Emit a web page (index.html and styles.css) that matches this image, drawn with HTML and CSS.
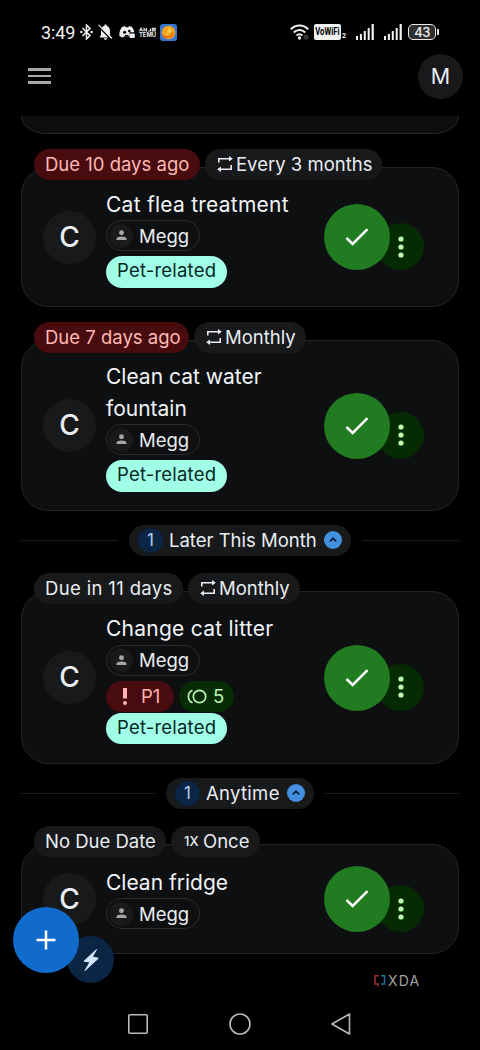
FILE: index.html
```html
<!DOCTYPE html>
<html lang="en">
<head>
<meta charset="utf-8">
<title>Chores</title>
<link rel="stylesheet" href="styles.css">
</head>
<body>
<svg class="defs" width="0" height="0" aria-hidden="true">
  <symbol id="repeat" viewBox="0 0 16 16"><g fill="none" stroke="currentColor" stroke-width="1.6"><path d="M1.800 6.500V2.800H14M1.800 9.500v0M14.200 9v4.200H2"/></g><path d="M12 0 15.800 2.800 12 5.600zM4 10.400.2 13.200 4 16z"/></symbol>
  <symbol id="person" viewBox="0 0 12 12"><circle cx="6" cy="3.1" r="2.7"/><path d="M.5 11V9.600C.5 7.800 3.400 7 6 7s5.500.8 5.500 2.600V11z"/></symbol>
  <symbol id="check" viewBox="0 0 24 20"><path d="m1.500 11 6.200 6L22.500 2.200" fill="none" stroke="currentColor" stroke-width="2.500"/></symbol>
  <symbol id="dots" viewBox="0 0 6 22"><circle cx="3" cy="3" r="2.600"/><circle cx="3" cy="11" r="2.600"/><circle cx="3" cy="19" r="2.600"/></symbol>
  <symbol id="up" viewBox="0 0 18 18"><circle cx="9" cy="9" r="9" fill="#4390df"/><path d="m5.800 10.500 3.200-3.200 3.200 3.200" fill="none" stroke="#071d36" stroke-width="1.700"/></symbol>
  <symbol id="signal" viewBox="0 0 18 16"><path d="M0 12h2v4H0zM3.900 10h2v6h-2zM7.800 7h2v9h-2zM11.700 4h2v12h-2zM15.600 0h2.200v16h-2.200z"/></symbol>
</svg>

<div class="statusbar">
  <span class="clock">3:49</span>
  <svg class="s-bt" width="13" height="16" viewBox="0 0 13 16"><path d="m2.500 4 7.500 7.600L6.500 15V1L10 4.400 2.500 12" fill="none" stroke="#eee" stroke-width="1.500"/><circle cx="1.300" cy="8" r="1.200" fill="#eee"/><circle cx="11.700" cy="8" r="1.200" fill="#eee"/></svg>
  <svg class="s-bell" width="15" height="16" viewBox="0 0 15 16"><path d="M1.500 13.500 3 11V7c0-3 1.500-4.700 3.500-5.200V.5h2v1.300C10.500 2.300 12 4 12 7v4l1.500 2.500zM6 14.200h3c0 2-3 2-3 0z" fill="#eee"/><path d="M-.2 1.800 13 15.200" stroke="#000" stroke-width="1.500"/><path d="m.6.8 13.400 13.700" stroke="#eee" stroke-width="1.100"/></svg>
  <svg class="s-discord" width="16" height="13" viewBox="0 0 16 13"><path d="M3 1 6 0l.8 1.200h2.600L10.200 0 13 1c1.400 2 2.200 3.500 2.300 5.300H10.500v4H5.300L4 11.500C2.400 11.200 1 10.500.3 9.800.2 6 1 3.600 3 1z" fill="#eee"/><circle cx="5.600" cy="6.200" r="1.500" fill="#000"/><circle cx="10.300" cy="5" r="1.300" fill="#000"/><rect x="10.500" y="7.500" width="5.300" height="4.500" rx="1" fill="#eee"/><path d="M6 9.500h3.500" stroke="#000"/></svg>
  <span class="temu"><svg width="17" height="5" viewBox="0 0 17 5"><path d="M.3 4.300 2 1l1.700 3.300M.8 3.300h2.400M5 4.500V1.500L7.500 4V1M9 4h2.500V1.500M13.300 4V1.400h2.900V4zM13.300 2.700h2.900" fill="none" stroke="#ddd" stroke-width="1.100"/></svg>TEMU</span>
  <svg class="s-app" width="17" height="17" viewBox="0 0 17 17"><rect width="17" height="17" rx="3" fill="#3777d2"/><circle cx="8.500" cy="8.500" r="6.800" fill="#f6a31d"/><path d="M2.800 11c3 4 9 2.500 10.500-2.500" fill="none" stroke="#e66c13" stroke-width="2"/><path d="M9.500 4 8 9l4-3" fill="none" stroke="#ffd451" stroke-width="1.500"/></svg>
  <svg class="s-wifi" width="19" height="16" viewBox="0 0 19 16"><g fill="none" stroke="#eee" stroke-width="2"><path d="M.8 5.200c5-5 12.400-5 17.400 0M3.700 8.500c3.300-3.300 8.300-3.300 11.600 0M6.500 11.500c2-1.700 4-1.700 6 0"/></g><circle cx="9.500" cy="14" r="1.700" fill="#eee"/><circle cx="16" cy="13" r="2.600" fill="#333"/></svg>
  <span class="vowifi"><span>VoWiFi</span></span><span class="sim">2</span>
  <svg class="sig sig-one"><use href="#signal"/></svg>
  <svg class="sig sig-two"><use href="#signal"/></svg>
  <span class="battery">43</span><span class="battery-tip"></span>
</div>

<header class="topbar">
  <div class="burger"><i></i><i></i><i></i></div>
  <div class="profile">M</div>
</header>

<main class="list">
  <div class="card-tail"></div>

  <section class="task task-a">
    <div class="tags"><span class="tag late w166">Due 10 days ago</span><span class="tag w177 icon-tag"><svg class="rep"><use href="#repeat"/></svg>Every 3 months</span></div>
    <div class="card">
      <div class="letter">C</div>
      <div class="info"><div class="title">Cat flea treatment</div>
        <div class="who"><i><svg><use href="#person"/></svg></i>Megg</div><div class="label">Pet-related</div></div>
      <div class="actions"><b class="done"><svg><use href="#check"/></svg></b><b class="more"><svg><use href="#dots"/></svg></b></div>
    </div>
  </section>

  <section class="task task-b">
    <div class="tags"><span class="tag late w155">Due 7 days ago</span><span class="tag w112 icon-tag"><svg class="rep"><use href="#repeat"/></svg>Monthly</span></div>
    <div class="card">
      <div class="letter">C</div>
      <div class="info"><div class="title">Clean cat water<br>fountain</div>
        <div class="who"><i><svg><use href="#person"/></svg></i>Megg</div><div class="label">Pet-related</div></div>
      <div class="actions"><b class="done"><svg><use href="#check"/></svg></b><b class="more"><svg><use href="#dots"/></svg></b></div>
    </div>
  </section>

  <div class="divider"><hr><span class="group group-later"><i>1</i><em>Later This Month</em><svg><use href="#up"/></svg></span><hr></div>

  <section class="task task-c">
    <div class="tags"><span class="tag w149 upcoming">Due in 11 days</span><span class="tag w112 icon-tag"><svg class="rep"><use href="#repeat"/></svg>Monthly</span></div>
    <div class="card">
      <div class="letter">C</div>
      <div class="info"><div class="title">Change cat litter</div>
        <div class="who"><i><svg><use href="#person"/></svg></i>Megg</div>
        <div class="badges"><span class="prio"><svg width="4" height="17" viewBox="0 0 4 17"><path d="M0 0h4v10.500H0z"/><circle cx="2" cy="15" r="2"/></svg>P1</span><span class="points"><svg width="20" height="15" viewBox="0 0 20 15"><g fill="none" stroke="currentColor" stroke-width="1.700"><circle cx="12.500" cy="7.500" r="6.200"/><path d="M5.500 1.200C0 3.500 0 11.500 5.500 13.800"/></g></svg>5</span></div>
        <div class="label">Pet-related</div></div>
      <div class="actions"><b class="done"><svg><use href="#check"/></svg></b><b class="more"><svg><use href="#dots"/></svg></b></div>
    </div>
  </section>

  <div class="divider"><hr><span class="group group-any"><i>1</i><em>Anytime</em><svg><use href="#up"/></svg></span><hr></div>

  <section class="task task-d">
    <div class="tags"><span class="tag w132">No Due Date</span><span class="tag w89 icon-tag"><small>1X</small>Once</span></div>
    <div class="card">
      <div class="letter">C</div>
      <div class="info"><div class="title">Clean fridge</div>
        <div class="who"><i><svg><use href="#person"/></svg></i>Megg</div></div>
      <div class="actions"><b class="done"><svg><use href="#check"/></svg></b><b class="more"><svg><use href="#dots"/></svg></b></div>
    </div>
  </section>
</main>

<div class="fabs">
  <div class="fab"><svg width="20" height="20" viewBox="0 0 20 20"><path d="M10 .5v19M.5 10h19" stroke="#fff" stroke-width="2.500"/></svg></div>
  <div class="bolt"><svg width="16" height="22" viewBox="0 0 16 22"><path d="M13.500.5 1 12.200l6 .8L2 21.500 15.300 9.300 9.300 8z" fill="#d5e6ff" stroke="#d5e6ff" stroke-linejoin="round"/></svg></div>
</div>

<div class="brand"><svg width="12" height="13" viewBox="0 0 12 13"><path d="M4.500 1.800H1V10h3.200v2.500" fill="none" stroke="#9e3032" stroke-width="1.500"/><path d="M7 1.800h3.500V10H7" fill="none" stroke="#20729d" stroke-width="1.500"/></svg><span>XDA</span></div>

<nav class="nav">
  <svg width="20" height="20" viewBox="0 0 20 20"><rect x=".8" y=".8" width="18.400" height="18.400" rx="1"/></svg>
  <svg width="22" height="22" viewBox="0 0 22 22"><circle cx="11" cy="11" r="10"/></svg>
  <svg width="20" height="22" viewBox="0 0 20 22"><path d="M18.500 1v20L1 11z" stroke-linejoin="round"/></svg>
</nav>
</body>
</html>
```
FILE: styles.css
```css
* { box-sizing: border-box; }
body { margin: 0; width: 480px; height: 1050px; overflow: hidden; position: relative; background: #000; color: #e9edf2; font-family: Inter, Roboto, sans-serif; font-size: 18.5px; }
svg { display: block; flex: none; fill: currentColor; }
.defs { position: absolute; }
i, em { font-style: normal; }
b { font-weight: 400; }

.statusbar { height: 50px; padding: 14px 0 0 41px; display: flex; align-items: center; color: #f2f2f2; }
.clock { width: 35px; font: 400 18px Roboto, sans-serif; letter-spacing: -.1px; }
.s-bt { margin-left: 4px; }
.s-bell { margin-left: 5px; }
.s-discord { margin-left: 6px; }
.temu { width: 17px; margin-left: 4px; font: 700 5.800px/6px Inter, sans-serif; display: flex; flex-direction: column; }
.s-app { margin-left: 4px; }
.s-wifi { margin-left: 113px; }
.vowifi { width: 27px; height: 16px; margin-left: 5px; border-radius: 2px; background: #f2f2f2; color: #000; font: 700 11px/16px "Roboto", sans-serif; display: flex; justify-content: center; }
.vowifi span { transform: scaleX(.7); }
.sim { width: 6px; margin: 8px 0 0 1px; font: 700 7px Roboto, sans-serif; }
.sig { width: 18px; height: 16px; }
.sig-one { margin-left: 8px; }
.sig-two { margin-left: 10px; }
.battery { width: 28px; height: 16px; margin-left: 6px; border: 1.5px solid #e8e8e8; border-radius: 5px; background: #303030; font: 500 13px/14px Inter, sans-serif; letter-spacing: -.5px; text-align: center; }
.battery-tip { width: 2px; height: 6px; margin-left: 1px; background: #ddd; }

.topbar { height: 66px; padding: 4px 17px 0 28px; display: flex; justify-content: space-between; align-items: flex-start; }
.burger { width: 23px; margin-top: 14px; display: flex; flex-direction: column; gap: 4px; }
.burger i { height: 2.500px; background: #a6a8aa; }
.profile { width: 45px; height: 45px; border-radius: 50%; background: #17191b; font-size: 21.500px; line-height: 44px; text-align: center; }

.list { height: 879px; overflow: hidden; padding: 0 21px; display: flex; flex-direction: column; }
.card-tail { height: 18px; flex: none; border: 1px solid #232425; border-top: 0; border-radius: 0 0 25px 25px / 0 0 18px 18px; background: #0e0e0f; }
.task { flex: none; }
.task-a { margin-top: 15px; }
.task-b { margin-top: 15px; }
.task-c { margin-top: 17px; }
.task-d { margin-top: 17px; }
.tags { height: 31px; padding-left: 13px; display: flex; gap: 5px; position: relative; z-index: 1; }
.tag { height: 31px; border-radius: 16px; padding: 0 0 2px 11px; display: flex; align-items: center; background: #17191b; white-space: nowrap; }
.late { background: #480b0e; color: #ffb9b5; }
.upcoming { letter-spacing: .35px; }
.icon-tag { padding-left: 12px; }
.w166 { width: 166px; } .w177 { width: 177px; } .w155 { width: 155px; }
.w112 { width: 112px; } .w149 { width: 149px; } .w132 { width: 132px; } .w89 { width: 89px; }
.rep { width: 16px; height: 16px; margin-right: 3px; }
.tag small { width: 20px; padding-left: 1px; font-size: 13px; font-weight: 500; }

.card { margin-top: -13px; border: 1px solid #232425; border-radius: 27px; background: #0e0f10; padding: 0 34px 0 21px; display: flex; align-items: center; }
.task-a .card { height: 140px; }
.task-b .card { height: 171px; }
.task-c .card { height: 173px; }
.task-d .card { height: 110px; }
.letter { width: 53px; height: 53px; border-radius: 50%; background: #17191b; text-align: center; line-height: 52px; font-size: 28px; font-weight: 500; }
.info { width: 218px; margin-left: 10px; padding-top: 2px; flex: none; }
.title { font-size: 21px; line-height: 31.500px; color: #f1f4f8; white-space: nowrap; }
.task-a .title, .task-c .title { letter-spacing: .25px; }
.task-d .info { margin-top: -4px; }
.who { width: 94px; height: 31px; border: 1px solid #2b2c2e; border-radius: 16px; padding-left: 2px; display: flex; align-items: center; gap: 6px; }
.who i { width: 24px; height: 24px; border-radius: 50%; background: #191a1b; display: flex; align-items: center; justify-content: center; color: #a5a6a6; }
.who svg { width: 11px; height: 11px; }
.label { width: 121px; height: 31.500px; margin-top: 5px; border-radius: 16px; background: #a1ffe8; color: #06271f; line-height: 29px; padding-left: 11px; letter-spacing: .2px; white-space: nowrap; }
.badges { display: flex; gap: 5px; margin-top: 5px; }
.badges span { height: 31px; border-radius: 16px; display: flex; align-items: center; }
.prio { width: 68px; padding-left: 17px; gap: 14px; background: #480b0e; color: #ffb2b0; }
.points { width: 55px; padding-left: 8px; gap: 6px; background: #072b04; color: #b6f7ad; }
.badges + .label { margin-top: 1px; }
.actions { display: flex; align-items: flex-end; }
.done { width: 66px; height: 66px; border-radius: 50%; background: #217b21; color: #fff; display: flex; align-items: center; justify-content: center; position: relative; z-index: 1; }
.done svg { width: 24px; height: 20px; }
.more { width: 47px; height: 47px; margin-left: -13px; border-radius: 50%; background: #062b03; color: #baffad; display: flex; align-items: center; justify-content: center; }
.more svg { width: 6px; height: 22px; }

.divider { margin-top: 13px; height: 32px; flex: none; display: flex; align-items: center; justify-content: space-between; gap: 11px; }
.divider hr { flex: 1; height: 1px; margin: 0; border: 0; background: #1c1d1f; }
.group { height: 31px; border-radius: 16px; background: #17191b; padding: 0 9px; display: flex; align-items: center; }
.group i { width: 25px; height: 25px; border-radius: 50%; background: #0b2544; color: #b4d0f4; font-size: 17px; line-height: 25px; text-align: center; }
.group em { flex: 1; margin-left: 6px; padding-bottom: 1px; white-space: nowrap; }
.group svg { width: 18px; height: 18px; }
.group-later { width: 222px; }
.group-any { width: 148px; }
.group-any em { letter-spacing: .3px; }

.fabs { position: absolute; z-index: 3; left: 13px; top: 907px; display: flex; align-items: flex-end; }
.fab, .bolt { border-radius: 50%; display: flex; align-items: center; justify-content: center; }
.fab { width: 66px; height: 66px; background: #106bcd; position: relative; z-index: 1; }
.bolt { width: 47px; height: 47px; margin: 0 0 -10px -12px; background: #0b2544; }
.brand { position: absolute; left: 374px; top: 974px; display: flex; align-items: center; gap: 2px; color: #a1a1a1; font-size: 14px; line-height: 13px; letter-spacing: 1.200px; }
.nav { height: 55px; padding: 3px 129px 0 128px; display: flex; align-items: center; justify-content: space-between; }
.nav svg { fill: none; stroke: #b8b8b8; stroke-width: 1.600; }
```
